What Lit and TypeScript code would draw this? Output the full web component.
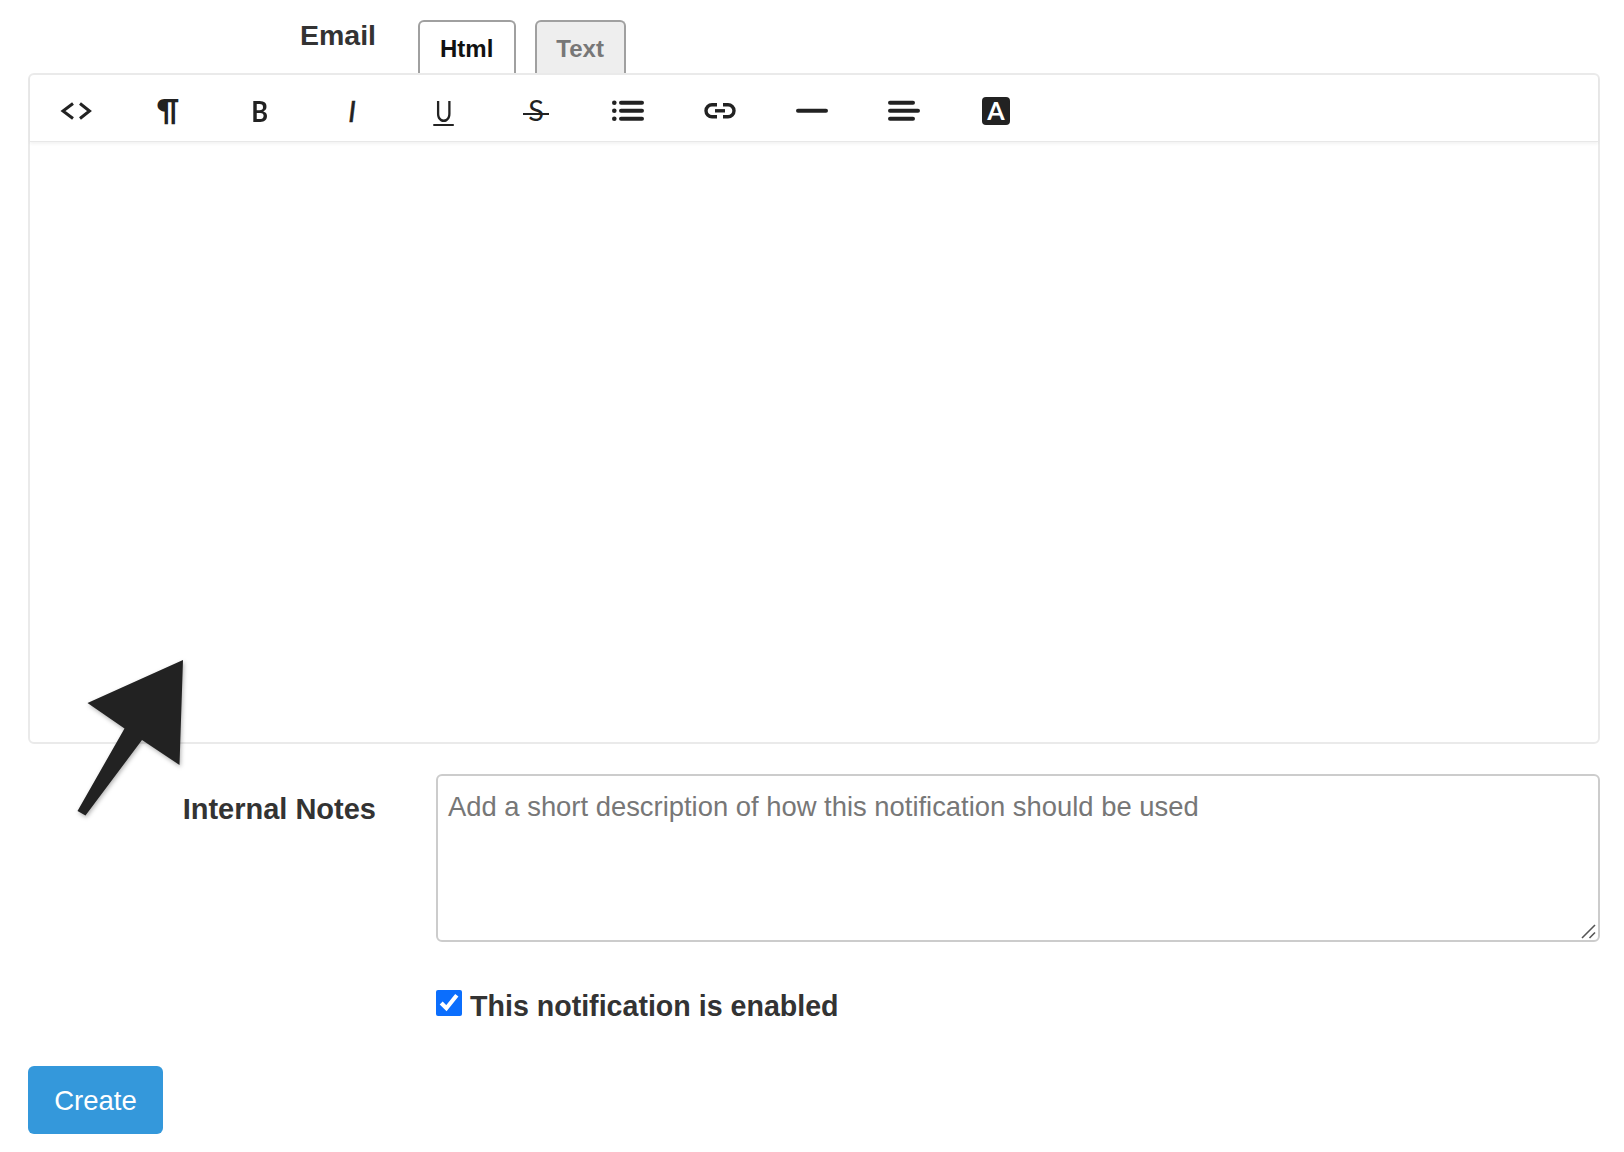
import { LitElement, css, html, svg } from 'lit';
import { customElement } from 'lit/decorators.js';

const ink = '#222';

const bars = (first: number, second: number, third: number) => svg`
  <g stroke=${ink} stroke-width="4" stroke-linecap="round">
    <line x1="2" y1="7.7" x2=${first} y2="7.7" />
    <line x1="2" y1="15.7" x2=${second} y2="15.7" />
    <line x1="2" y1="23.7" x2=${third} y2="23.7" />
  </g>`;

const icons = {
  code: svg`<g fill="none" stroke=${ink} stroke-width="3"><polyline points="13,8.5 3,16 13,23.5" /><polyline points="20,8.5 29.5,16 20,23.5" /></g>`,
  list: svg`
    <g fill=${ink}><circle cx="2.3" cy="7.7" r="2.3" /><circle cx="2.3" cy="15.7" r="2.3" /><circle cx="2.3" cy="23.7" r="2.3" /></g>
    <g stroke=${ink} stroke-width="4" stroke-linecap="round">
      <line x1="9" y1="7.7" x2="30" y2="7.7" />
      <line x1="9" y1="15.7" x2="30" y2="15.7" />
      <line x1="9" y1="23.7" x2="30" y2="23.7" />
    </g>`,
  link: svg`
    <g fill="none" stroke=${ink} stroke-width="3.4">
      <path d="M13 9.8H8a6 6 0 0 0 0 12h5" />
      <path d="M19 9.8h5a6 6 0 0 1 0 12h-5" />
    </g>
    <line x1="11" y1="15.8" x2="21" y2="15.8" stroke=${ink} stroke-width="3.4" />`,
  rule: svg`<line x1="2" y1="15.7" x2="30" y2="15.7" stroke=${ink} stroke-width="4" stroke-linecap="round" />`,
  align: bars(25, 30, 25),
};

@customElement('app-root')
export class AppRoot extends LitElement {
  static styles = css`
    :host {
      display: block;
      position: relative;
      height: 1152px;
      background: #fff;
      font-family: 'Liberation Sans', Arial, sans-serif;
      color: #333;
      overflow: hidden;
    }
    .page {
      padding: 0 24px 0 28px;
    }
    .row {
      display: flex;
      align-items: flex-start;
    }
    .label {
      width: 348px;
      flex: none;
      text-align: right;
      font-size: 29px;
      line-height: 32px;
      font-weight: bold;
    }
    .email {
      padding-top: 19px;
      font-size: 28.5px;
    }
    .tabs {
      display: flex;
      gap: 19px;
      margin-left: 42px;
      padding-top: 20px;
      height: 53px;
    }
    .tab {
      height: 54px;
      box-sizing: border-box;
      padding: 13px 21px 0 20px;
      border: 2px solid #a0a0a0;
      border-bottom: none;
      border-radius: 6px 6px 0 0;
      font-size: 24px;
      line-height: 28px;
      font-weight: bold;
      color: #111;
      background: #fff;
    }
    .tab.off {
      padding: 13px 20px 0 19px;
      background: #eee;
      color: #777;
    }
    .editor {
      position: relative;
      height: 671px;
      box-sizing: border-box;
      border: 2px solid #eaeaea;
      border-radius: 6px;
      background: #fff;
    }
    .toolbar {
      display: flex;
      height: 67px;
      box-sizing: border-box;
      padding-top: 20px;
      border-bottom: 1px solid #e8e8e8;
      box-shadow: 0 2px 3px rgba(0, 0, 0, 0.05);
    }
    .btn {
      flex: none;
      width: 92px;
      height: 32px;
      display: flex;
      align-items: center;
      justify-content: center;
      color: #222;
    }
    .btn svg {
      width: 32px;
      height: 32px;
      display: block;
    }
    .glyph {
      position: relative;
      display: block;
      font-family: 'Lato', sans-serif;
      font-size: 29px;
      line-height: 32px;
    }
    .pil {
      font-weight: bold;
      font-size: 31px;
      transform: translateY(-2px);
    }
    .b {
      font-weight: bold;
      transform: scaleX(0.88);
    }
    .i {
      font-style: italic;
      -webkit-text-stroke: 0.5px #222;
    }
    .u {
      transform: scaleX(0.82);
    }
    .under::after {
      content: '';
      position: absolute;
      left: -2px;
      right: -2px;
      top: 29px;
      height: 2px;
      background: #222;
    }
    .s {
      transform: translateY(-1px);
    }
    .s::after {
      content: '';
      position: absolute;
      left: -5px;
      right: -5px;
      top: 19px;
      height: 2px;
      background: #222;
    }
    .box-a {
      width: 28px;
      height: 28px;
      margin-top: -1px;
      border-radius: 4px;
      background: #222;
      color: #fff;
      font-family: 'Lato', sans-serif;
      font-size: 25px;
      line-height: 27px;
      font-weight: bold;
      text-align: center;
    }
    .notes {
      margin-top: 30px;
    }
    .notes .label {
      padding-top: 19px;
    }
    .area {
      position: relative;
      flex: none;
      margin-left: 60px;
    }
    textarea {
      display: block;
      width: 1164px;
      height: 168px;
      box-sizing: border-box;
      padding: 15px 10px 9px;
      border: 2px solid #ccc;
      border-radius: 6px;
      outline: none;
      resize: none;
      font-family: inherit;
      font-size: 27.4px;
      line-height: 32px;
      color: #333;
    }
    textarea::placeholder {
      color: #777;
      opacity: 1;
    }
    .grip {
      position: absolute;
      right: 2px;
      bottom: 2px;
      width: 18px;
      height: 18px;
    }
    .check {
      display: flex;
      align-items: flex-start;
      gap: 8px;
      height: 26px;
      margin: 48px 0 0 408px;
      font-size: 28.6px;
      line-height: 26px;
      font-weight: bold;
    }
    .check span {
      margin-top: 3px;
    }
    .check input {
      flex: none;
      width: 26px;
      height: 26px;
      margin: 0;
      accent-color: #0b6efd;
    }
    .create {
      display: block;
      margin-top: 50px;
      width: 135px;
      height: 68px;
      padding: 2px 0 0;
      border: none;
      border-radius: 6px;
      background: #3498db;
      color: #fff;
      font-family: inherit;
      font-size: 27.5px;
    }
    .arrow {
      position: absolute;
      left: 0;
      top: 0;
      width: 1624px;
      height: 1152px;
      pointer-events: none;
      filter: drop-shadow(1px 2px 2px rgba(0, 0, 0, 0.3));
    }
  `;

  private icon(content: unknown) {
    return html`<div class="btn"><svg viewBox="0 0 32 32">${content}</svg></div>`;
  }

  render() {
    return html`
      <div class="page">
        <div class="row">
          <div class="label email">Email</div>
          <div class="tabs">
            <div class="tab">Html</div>
            <div class="tab off">Text</div>
          </div>
        </div>
        <div class="editor">
          <div class="toolbar">
            ${this.icon(icons.code)}
            <div class="btn"><span class="glyph pil">¶</span></div>
            <div class="btn"><span class="glyph b">B</span></div>
            <div class="btn"><span class="glyph i">I</span></div>
            <div class="btn"><span class="glyph u under">U</span></div>
            <div class="btn"><span class="glyph s">S</span></div>
            ${this.icon(icons.list)}
            ${this.icon(icons.link)}
            ${this.icon(icons.rule)}
            ${this.icon(icons.align)}
            <div class="btn"><div class="box-a">A</div></div>
          </div>
        </div>
        <div class="row notes">
          <div class="label">Internal Notes</div>
          <div class="area">
            <textarea placeholder="Add a short description of how this notification should be used"></textarea>
            <svg class="grip" viewBox="0 0 18 18">
              <g stroke="#555" stroke-width="1.6">
                <line x1="2" y1="16" x2="15" y2="3" />
                <line x1="9.5" y1="16" x2="15" y2="10.5" />
              </g>
            </svg>
          </div>
        </div>
        <label class="check"><input type="checkbox" checked /><span>This notification is enabled</span></label>
        <button class="create">Create</button>
      </div>
      <svg class="arrow" viewBox="0 0 1624 1152">
        <polygon fill="#222" points="183,660 87.5,703 124.5,728.5 77.5,811 85.5,815.5 142,740 179.5,765" />
      </svg>
    `;
  }
}
